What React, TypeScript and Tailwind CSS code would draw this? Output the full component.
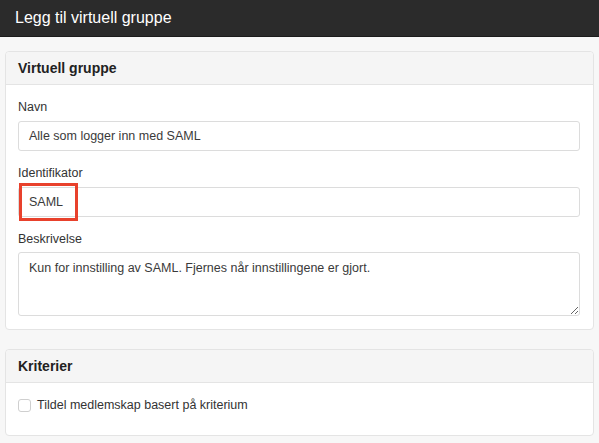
export default function App() {
  return (
    <div className="min-h-[443px] bg-[#f7f7f7] font-['Liberation_Sans',Arial,sans-serif] text-[#333]">
      {/* Top bar */}
      <div className="h-[37px] bg-[#2b2b2b] border-b border-[#1c1c1c] flex items-center px-[15px]">
        <h1 className="text-[16px] text-white leading-none">Legg til virtuell gruppe</h1>
      </div>

      <div className="px-[5px] pt-[14px] pb-[8px] flex flex-col gap-[19px]">
        {/* Virtuell gruppe */}
        <section className="bg-white border border-[#e4e4e4] rounded-[4px]">
          <div className="h-[33px] bg-[#f5f5f5] border-b border-[#e4e4e4] rounded-t-[4px] flex items-center px-[12px]">
            <h2 className="text-[14px] font-bold text-[#222]">Virtuell gruppe</h2>
          </div>
          <div className="pl-[12px] pr-[13px] pt-[12px] pb-[13px]">
            <div>
              <label className="block text-[12.5px] leading-[20px] mb-[4px]">Navn</label>
              <div className="h-[30px] border border-[#dcdcdc] rounded-[3px] flex items-center px-[10px] text-[12.5px] text-[#3a3a3a]">
                Alle som logger inn med SAML
              </div>
            </div>
            <div className="mt-[12px]">
              <label className="block text-[12.5px] leading-[20px] mb-[4px]">Identifikator</label>
              <div className="relative">
                <div className="h-[30px] border border-[#dcdcdc] rounded-[3px] flex items-center px-[10px] text-[12.5px] text-[#3a3a3a]">
                  SAML
                </div>
                <div className="absolute left-[1px] top-[-4px] w-[59px] h-[38px] border-[3px] border-[#e8412c]" />
              </div>
            </div>
            <div className="mt-[12px]">
              <label className="block text-[12.5px] leading-[20px] mb-[3px]">Beskrivelse</label>
              <textarea
                readOnly
                defaultValue="Kun for innstilling av SAML. Fjernes når innstillingene er gjort."
                className="block w-full h-[64px] border border-[#dcdcdc] rounded-[3px] px-[10px] py-[6px] text-[12.5px] leading-[18px] text-[#3a3a3a] resize-y outline-none"
              />
            </div>
          </div>
        </section>

        {/* Kriterier */}
        <section className="bg-white border border-[#e4e4e4] rounded-[4px]">
          <div className="h-[33px] bg-[#f5f5f5] border-b border-[#e4e4e4] rounded-t-[4px] flex items-center px-[12px]">
            <h2 className="text-[14px] font-bold text-[#222]">Kriterier</h2>
          </div>
          <div className="px-[12px] pt-[12px] pb-[20px]">
            <label className="flex items-center gap-[6px] h-[20px] text-[12.5px]">
              <span className="w-[13px] h-[13px] border border-[#cfcfcf] rounded-[3px] bg-white" />
              Tildel medlemskap basert på kriterium
            </label>
          </div>
        </section>
      </div>
    </div>
  )
}
